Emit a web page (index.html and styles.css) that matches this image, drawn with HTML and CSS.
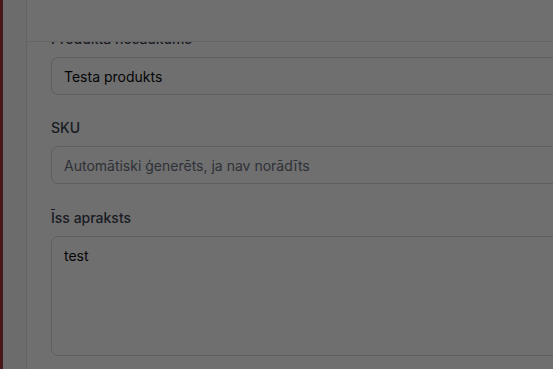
FILE: index.html
```html
<!DOCTYPE html>
<html lang="lv">
<head>
<meta charset="utf-8">
<title>Produkts</title>
<link rel="stylesheet" href="styles.css">
</head>
<body>
<div class="page">
  <div class="edge"></div>
  <div class="panel">
    <div class="gutter"></div>
    <div class="main">
      <div class="header"></div>
      <div class="scroll">
        <form class="form">
          <div class="field">
            <label class="label">Produkta nosaukums</label>
            <input class="input" type="text" value="Testa produkts">
          </div>
          <div class="field">
            <label class="label">SKU</label>
            <input class="input" type="text" placeholder="Automātiski ģenerēts, ja nav norādīts">
          </div>
          <div class="field field-last">
            <label class="label">Īss apraksts</label>
            <textarea class="textarea">test</textarea>
          </div>
        </form>
      </div>
    </div>
  </div>
</div>
<div class="overlay"></div>
</body>
</html>
```
FILE: styles.css
```css
* { box-sizing: border-box; }
html, body { margin: 0; padding: 0; height: 100%; overflow: hidden; }
body {
  font-family: Inter, "Noto Sans", "Liberation Sans", sans-serif;
  font-size: 14px;
  color: #0b0b0c;
  background: #fff;
}
.page { display: flex; height: 100vh; }
.edge { width: 3px; background: #a3363c; flex: none; }
.panel { flex: 1; display: flex; min-width: 0; background: #fff; }
.gutter {
  width: 24px; flex: none;
  background: #f7f7f8;
  border-right: 1px solid #e3e4e8;
}
.main { flex: 1; display: flex; flex-direction: column; min-width: 0; }
.header {
  height: 42px; flex: none;
  background: #fff;
  border-bottom: 1px solid #e5e7eb;
  position: relative; z-index: 2;
}
.scroll { flex: 1; overflow: hidden; }
.form {
  margin-top: -13px;
  padding-left: 24px;
  width: 620px;
  display: flex; flex-direction: column; gap: 23px;
}
.field { display: flex; flex-direction: column; gap: 8px; }
.field-last { margin-top: 1px; }
.label {
  font-size: 14px; line-height: 20px; font-weight: 500;
  color: #3a4150;
}
.input, .textarea {
  font-family: inherit; font-size: 14px; line-height: 20px;
  color: #0b0b0c;
  background: #fff;
  border: 1px solid #d6d9de;
  border-radius: 7px;
  padding: 8px 12px;
  width: 100%;
  outline: none;
  margin: 0;
}
.input { height: 38px; }
.input::placeholder { color: #6b7280; opacity: 1; }
.textarea { height: 120px; padding: 9px 12px; resize: none; display: block; }
.overlay {
  position: fixed; inset: 0;
  background: rgba(0, 0, 0, 0.565);
  z-index: 10;
}
```
